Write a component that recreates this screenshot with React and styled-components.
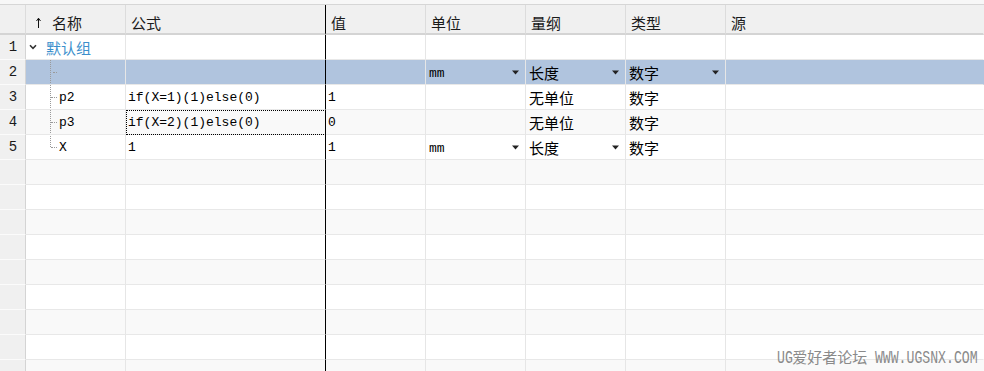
import React from 'react';
import styled, { createGlobalStyle } from 'styled-components';

const Global = createGlobalStyle`
  html, body { margin: 0; padding: 0; background: #fff; }
  body { font-family: "Noto Sans CJK SC", "Noto Sans", sans-serif; }
`;

const COLS = '26px 100px 200px 100px 100px 100px 100px 1fr';
const CJK = '"Noto Sans CJK SC", "Noto Sans", sans-serif';
const MONO = '"Liberation Mono", "DejaVu Sans Mono", monospace';

const Frame = styled.div`
  position: relative;
  width: 984px;
  height: 371px;
  overflow: hidden;
  background: #fff;
  display: flex;
  flex-direction: column;
`;

const TopStrip = styled.div`
  flex: none;
  height: 4px;
  background: #f7f7f7;
  border-bottom: 1px solid #d6d6d6;
`;

const HeaderRow = styled.div`
  flex: none;
  display: grid;
  grid-template-columns: ${COLS};
  height: 30px;
`;

const HeaderCell = styled.div`
  box-sizing: border-box;
  height: 30px;
  background: #f0f0f0;
  border-bottom: 2px solid #d4d4d4;
  border-right: 1px solid ${(p) => (p.$guide ? '#000' : p.$last ? 'transparent' : '#dcdcdc')};
  display: flex;
  align-items: center;
  padding: 7px 0 0 ${(p) => (p.$sort ? '10px' : '5px')};
  font-family: ${CJK};
  font-size: 15px;
  color: #1a1a1a;
  gap: 11px;
  white-space: nowrap;
`;

const Body = styled.div`
  display: grid;
  grid-template-columns: ${COLS};
  grid-auto-rows: 25px;
`;

const RowNum = styled.div`
  box-sizing: border-box;
  background: #f0f0f0;
  border-right: 1px solid #d4d4d4;
  border-bottom: 1px solid #fbfbfb;
  display: flex;
  align-items: center;
  justify-content: center;
  font-family: ${MONO};
  font-size: 14px;
  color: #1a1a1a;
  padding-left: 1px;
`;

const Cell = styled.div`
  box-sizing: border-box;
  position: relative;
  background: ${(p) => p.$bg};
  border-bottom: 1px solid #e8e8e8;
  border-right: 1px solid ${(p) => (p.$guide ? '#000' : p.$last ? 'transparent' : '#e6e6e6')};
  outline: ${(p) => (p.$focus ? '1px dotted #000' : 'none')};
  outline-offset: -1px;
  display: flex;
  align-items: center;
  justify-content: ${(p) => (p.$dropdown ? 'space-between' : 'flex-start')};
  padding: 0 ${(p) => (p.$dropdown ? '6px' : '0')} 0 ${(p) => (p.$mono ? '2px' : '3px')};
  font-family: ${(p) => (p.$mono ? MONO : CJK)};
  font-size: ${(p) => (p.$mono ? '13px' : '15px')};
  color: #000;
  white-space: nowrap;
  overflow: hidden;
`;

const NameCell = styled(Cell)`
  padding-left: ${(p) => (p.$group ? '3px' : '24px')};
  align-items: stretch;
`;

const GroupLabel = styled.span`
  display: flex;
  align-items: center;
  gap: 9px;
  color: #3b8fcc;
  font-family: ${CJK};
  font-size: 15px;
`;

const Guide = styled.span`
  position: relative;
  flex: none;
  width: 9px;
  &::before {
    content: '';
    position: absolute;
    left: 0;
    top: -1px;
    bottom: ${(p) => (p.$last ? '50%' : '-1px')};
    border-left: 1px dotted #9a9a9a;
  }
  &::after {
    content: '';
    position: absolute;
    left: ${(p) => (p.$empty ? '3px' : '1px')};
    top: 50%;
    width: ${(p) => (p.$empty ? '4px' : '6px')};
    border-top: 1px dotted #9a9a9a;
  }
`;

const ParamName = styled.span`
  display: flex;
  align-items: center;
  font-family: ${MONO};
  font-size: 13px;
`;

const UnitText = styled.span`
  font-family: ${MONO};
  font-size: 13px;
  padding-top: 3px;
`;

const Watermark = styled.div`
  position: absolute;
  right: 6px;
  bottom: 5px;
  display: flex;
  align-items: baseline;
  color: #8a8a8a;
  font-family: ${CJK};
  font-size: 15px;
  line-height: 16px;
  pointer-events: none;
`;

const LATIN_ADV = 18 * 0.6;
const LATIN_SCALE = 7.9 / LATIN_ADV;

const Latin = styled.span`
  display: inline-block;
  font-family: "Liberation Mono", monospace;
  font-size: 18px;
  line-height: 16px;
  white-space: pre;
  transform: scaleX(${LATIN_SCALE});
  transform-origin: left center;
  margin-right: ${(p) => -(1 - LATIN_SCALE) * LATIN_ADV * p.$chars}px;
`;

const SortArrow = () => (
  <svg width="5" height="11" viewBox="0 0 5 11">
    <path d="M2.5 1.5 V11" stroke="#111" strokeWidth="1" fill="none" />
    <path d="M0.5 4 L2.5 1.2 L4.5 4" stroke="#111" strokeWidth="1" fill="none" />
  </svg>
);

const Chevron = () => (
  <svg width="8" height="6" viewBox="0 0 8 6" style={{ flex: 'none' }}>
    <path d="M1 1.3 L4 4.3 L7 1.3" stroke="#333" strokeWidth="1.6" fill="none" />
  </svg>
);

const DropArrow = () => (
  <svg width="7" height="5" viewBox="0 0 7 5" style={{ flex: 'none' }}>
    <path d="M0 0.5 H7 L3.5 4.5 Z" fill="#222" />
  </svg>
);

const headers = ['', '名称', '公式', '值', '单位', '量纲', '类型', '源'];

const rows = [
  { group: true, label: '默认组' },
  { selected: true, name: '', formula: '', value: '', unit: 'mm', dim: '长度', type: '数字', dimDrop: true, typeDrop: true, unitDrop: true },
  { name: 'p2', formula: 'if(X=1)(1)else(0)', value: '1', unit: '', dim: '无单位', type: '数字' },
  { name: 'p3', formula: 'if(X=2)(1)else(0)', value: '0', unit: '', dim: '无单位', type: '数字', focus: true },
  { name: 'X', formula: '1', value: '1', unit: 'mm', dim: '长度', type: '数字', unitDrop: true, dimDrop: true, last: true },
];

const EMPTY_ROWS = 9;

export default function App() {
  const bgFor = (i, selected) => (selected ? '#b0c4de' : i % 2 === 1 ? '#f9f9f9' : '#ffffff');

  return (
    <>
      <Global />
      <Frame>
        <TopStrip />
        <HeaderRow>
          {headers.map((h, i) => (
            <HeaderCell key={i} $sort={i === 1} $guide={i === 2} $last={i === headers.length - 1}>
              {i === 1 && <SortArrow />}
              {h}
            </HeaderCell>
          ))}
        </HeaderRow>
        <Body>
          {rows.map((r, i) => {
            const bg = bgFor(i, r.selected);
            if (r.group) {
              return (
                <React.Fragment key={i}>
                  <RowNum>{i + 1}</RowNum>
                  <NameCell $bg={bg} $group>
                    <GroupLabel>
                      <Chevron />
                      {r.label}
                    </GroupLabel>
                  </NameCell>
                  <Cell $bg={bg} $guide />
                  <Cell $bg={bg} />
                  <Cell $bg={bg} />
                  <Cell $bg={bg} />
                  <Cell $bg={bg} />
                  <Cell $bg={bg} $last />
                </React.Fragment>
              );
            }
            return (
              <React.Fragment key={i}>
                <RowNum>{i + 1}</RowNum>
                <NameCell $bg={bg}>
                  <Guide $last={r.last} $empty={!r.name} />
                  {r.name && <ParamName>{r.name}</ParamName>}
                </NameCell>
                <Cell $bg={bg} $mono $guide $focus={r.focus}>{r.formula}</Cell>
                <Cell $bg={bg} $mono>{r.value}</Cell>
                <Cell $bg={bg} $dropdown={r.unitDrop}>
                  {r.unit && <UnitText>{r.unit}</UnitText>}
                  {r.unitDrop && <DropArrow />}
                </Cell>
                <Cell $bg={bg} $dropdown={r.dimDrop}>
                  <span>{r.dim}</span>
                  {r.dimDrop && <DropArrow />}
                </Cell>
                <Cell $bg={bg} $dropdown={r.typeDrop}>
                  <span>{r.type}</span>
                  {r.typeDrop && <DropArrow />}
                </Cell>
                <Cell $bg={bg} $last />
              </React.Fragment>
            );
          })}
          {Array.from({ length: EMPTY_ROWS }).map((_, k) => {
            const i = rows.length + k;
            const bg = bgFor(i, false);
            return (
              <React.Fragment key={`e${k}`}>
                <RowNum />
                <Cell $bg={bg} />
                <Cell $bg={bg} $guide />
                <Cell $bg={bg} />
                <Cell $bg={bg} />
                <Cell $bg={bg} />
                <Cell $bg={bg} />
                <Cell $bg={bg} $last />
              </React.Fragment>
            );
          })}
        </Body>
        <Watermark>
          <Latin $chars={2}>UG</Latin>
          <span>爱好者论坛</span>
          <Latin $chars={14}> WWW.UGSNX.COM</Latin>
        </Watermark>
      </Frame>
    </>
  );
}
